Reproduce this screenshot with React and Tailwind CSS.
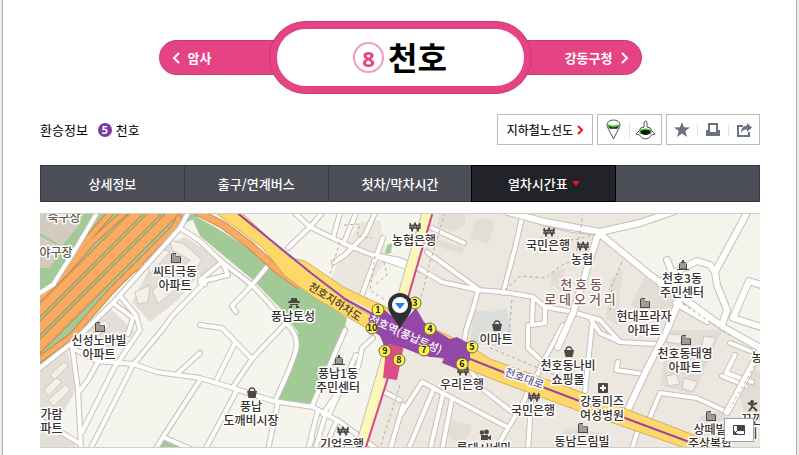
import React, { useState } from "react";

const tabs = ["상세정보", "출구/연계버스", "첫차/막차시간", "열차시간표"];

// Side streets
const roads = [
  "M36 371L72 343L113 303L180 228L200 241L222 262L252 285L268 302L283 320Q300 335 296 350Q292 365 275 401",
  "M180 228L188 213", "M54 283L75 250L97 213", "M40 293L54 284",
  "M113 303L133 318L128 334", "M120 296L136 315L140 330L114 368L82 432",
  "M205 282L173 315L162 330L133 365L90 450",
  "M72 346L78 390L81 450",
  "M72 348L97 361L133 364L157 372L200 378L233 388L273 401L313 407L340 422L378 450",
  "M98 362L88 380L78 393", "M200 353L178 373", "M222 262L200 280L205 284",
  "M200 380L163 437L155 450", "M163 437L200 453", "M40 420L79 443",
  "M271 262L252 285L232 306L236 312", "M200 282L228 275L222 262",
  "M200 325L222 328L252 359L233 387", "M235 343L217 379", "M285 324L252 359",
  "M237 390L205 450", "M278 402L268 450", "M345 330L312 406",
  "M318 410L308 450", "M326 413L315 450", "M337 420L324 450",
  "M373 338L362 348L358 367L352 372L323 414", "M356 355L330 413", "M312 438L308 450",
  "M295 213L310 227L347 245L373 255L400 260L420 270",
  "M322 213L310 227L288 248", "M340 213L333 238", "M356 213L345 240",
  "M375 213L365 235L345 255L334 262", "M383 238L360 300", "M375 256L410 268",
];

const eastRoads = [
  "M415 266L442 282L478 290L503 292L533 297L545 307L573 312L600 320",
  "M432 228L464 243", "M427 252L478 289", "M523 213L515 248L503 293",
  "M478 290L475 302L466 330L464 343", "M523 216L543 223L573 230L600 233",
  "M533 298L532 325L545 323L545 308",
  "M470 368L480 387L512 412", "M530 387L523 403L495 450", "M532 388L528 450",
  "M528 325L528 348L543 362L533 384", "M563 325L543 362", "M592 325L585 392",
  "M507 427L422 382L400 416", "M434 388L408 450", "M443 394L430 450", "M452 399L442 450",
  "M600 320L620 342L655 344", "M590 318L600 333L620 342", "M618 362L616 370L643 374",
  "M727 412L697 398L660 393L648 422", "M640 422L632 450",
  "M400 400L384 392", "M403 405L390 450",
  "M735 355L726 373L752 382", "M722 376L746 386", "M730 343L750 351",
];

const wideRoads = [
  "M505 211L545 222L600 232L640 223L675 211",
  "M600 234L650 275L683 298L723 327L764 350",
  "M598 234L573 313L558 347", "M680 298L667 330L645 373L625 416",
  "M748 211L715 272L717 285L727 310L722 325",
  "M660 283L668 276L697 261L710 265L715 272", "M667 260L673 275",
  "M764 286L749 281L733 318L764 328",
  "M676 303L707 321", "M764 344L727 412",
];

const blocks = [
  "M160 248L185 237L215 256L178 300L150 322L132 302Z", "M84 330L110 308L135 332L110 350Z",
  "M40 368L68 350L76 390L60 418L40 440Z", "M200 246L222 262L200 278Z",
  "M40 425L75 440L75 448H40Z",
];
const eastBlocks = [
  "M440 213H465L466 225L452 232L437 224Z", "M474 222L484 217L495 222L488 244L470 238Z",
  "M434 238L465 248L462 254L432 245Z", "M551 272L565 268L562 292L551 284Z",
  "M645 277L678 296L662 323L630 305Z", "M610 280L622 268L618 325L606 318Z",
  "M668 330H722L694 394L660 385Z", "M450 420L472 425L465 445L448 437Z",
  "M555 438L570 428L610 434L602 448H552Z", "M738 390L755 370L764 372V425L744 415Z",
  "M700 416L725 410L728 448H698Z",
];

const parcels = [
  "M146 260L160 248L170 252L150 274Z", "M152 290L174 276L182 284L158 304Z",
  "M170 240L184 244L202 260L192 274L184 266L190 260L172 250Z", "M135 292L150 285L148 302L138 304Z",
  "M50 375L64 362L68 366L54 380Z", "M44 390L56 378L62 382L48 396Z",
  "M48 400L66 384L70 390L54 406Z", "M92 330L104 320L110 326L98 336Z",
  "M668 334L684 335L680 344L666 342Z", "M704 336L716 338L706 362L698 360Z",
  "M666 376L676 374L680 384L668 386Z", "M684 378L698 382L692 392L682 388Z",
];

const dashes = [
  "M445 213L437 240L430 262L413 330", "M344 225L360 224L357 236L372 238", "M340 242L328 280L338 290",
  "M375 256L370 290L385 300", "M384 262L387 275L375 285", "M505 290L520 276L545 278L562 265L575 260L583 215",
  "M512 300L508 345", "M490 348L555 375", "M622 262L612 285L610 310", "M640 415L700 438",
  "M400 385L380 448", "M540 238L575 240L596 234", "M764 350L730 408", "M683 304L730 335",
];

const expressway = [
  "M60 278L80 248L112 211", "M40 299L66 272L92 242L126 211",
  "M36 362L72 336L112 290L170 232L178 222V211M130 272L140 265",
];
const expresswayLanes = ["M35 315L141 209", "M35 333L159 209", "M35 351L177 209"];

// x, y of the first line, then the lines of the label
const labels = [
  { x: 64, y: 222, lines: ["축구장"], color: "#66594d" },
  { x: 56, y: 257, lines: ["야구장"], color: "#66594d" },
  { x: 175, y: 276, lines: ["씨티극동", "아파트"], icon: "apt" },
  { x: 99, y: 345, lines: ["신성노바빌", "아파트"], icon: "apt" },
  { x: 293, y: 321, lines: ["풍납토성"], icon: "gate" },
  { x: 46, y: 419, lines: ["한가람", "아파트"] },
  { x: 251, y: 411, lines: ["풍납", "도깨비시장"], icon: "basket" },
  { x: 338, y: 378, lines: ["풍납1동", "주민센터"], icon: "office" },
  { x: 342, y: 449, lines: ["기업은행"], icon: "won" },
  { x: 414, y: 245, lines: ["농협은행"], icon: "won" },
  { x: 548, y: 250, lines: ["국민은행"], icon: "won" },
  { x: 582, y: 264, lines: ["농협"], icon: "won" },
  { x: 682, y: 283, lines: ["천호3동", "주민센터"], icon: "office" },
  { x: 644, y: 321, lines: ["현대프라자", "아파트"], icon: "apt" },
  { x: 496, y: 344, lines: ["이마트"], icon: "basket" },
  { x: 568, y: 370, lines: ["천호동나비", "쇼핑몰"], icon: "basket" },
  { x: 685, y: 358, lines: ["천호동태영", "아파트"], icon: "apt" },
  { x: 462, y: 389, lines: ["우리은행"], icon: "won" },
  { x: 533, y: 415, lines: ["국민은행"], icon: "won" },
  { x: 602, y: 406, lines: ["강동미즈", "여성병원"], icon: "cross" },
  { x: 582, y: 446, lines: ["동남드림빌"], icon: "apt" },
  { x: 710, y: 434, lines: ["상떼빌", "주상복합"], icon: "apt" },
  { x: 484, y: 453, lines: ["롯데시네마"], icon: "movie" },
  { x: 757, y: 362, lines: ["농"] },
  { x: 752, y: 424, lines: ["꼬깐", "이"], icon: "play" },
];

const exits = [
  [1, 378, 310], [10, 372, 328], [9, 385, 351], [8, 399, 360], [7, 424, 350],
  [6, 462, 364], [5, 472, 347], [4, 430, 329], [3, 415, 303],
];

const Streets = ({ list, width, casing = "#c6c0b8", color = "#fff" }) => (
  <g fill="none" strokeLinecap="round" strokeLinejoin="round">
    {list.map((d) => <path key={d} d={d} stroke={casing} strokeWidth={width + 2} />)}
    {list.map((d) => <path key={d} d={d} stroke={color} strokeWidth={width} />)}
  </g>
);

const PlaceIcon = ({ type }) => {
  if (type === "won") {
    return <path d="M-5 -4L-3 4L0 -4L3 4L5 -4M-6 -1.5H6M-6 1H6" fill="none" stroke="#4c4846" strokeWidth="1.5" />;
  }
  if (type === "apt") {
    return (
      <g>
        <path d="M-5 5V-4L-3 -5H0V-2H4L5 -1V5Z" fill="#4c4846" />
        <path d="M-3.5 -2.5H0M-3.5 0H4M-3.5 2.5H4" stroke="#f2efe8" strokeDasharray="1 1" />
      </g>
    );
  }
  if (type === "office") {
    return (
      <g>
        <path d="M-6 5V4H-4V-1L-2 -3H-1V-5H1V-3H2L4 -1V4H6V5Z" fill="#4c4846" />
        <path d="M-2.5 -0.5H3M-2.5 2H3" stroke="#f2efe8" strokeDasharray="1 1" />
      </g>
    );
  }
  if (type === "basket") {
    return (
      <g>
        <path d="M-5 -2H5L3.5 5H-3.5Z" fill="#4c4846" />
        <path d="M-3 -1Q-3 -5 0 -5Q3 -5 3 -1" fill="none" stroke="#4c4846" strokeWidth="1.3" />
      </g>
    );
  }
  if (type === "gate") {
    return <path d="M-6 -1L-3 -3V-5H3V-3L6 -1V0H-6ZM-4 1H4V2H-4ZM-5 3H-2V5H-5ZM2 3H5V5H2ZM-3 2H-2V5H-3ZM2 2H3V5H2Z" fill="#4c4846" />;
  }
  if (type === "cross") {
    return (
      <g>
        <rect x="-5" y="-5" width="10" height="10" rx="1" fill="#4c4846" />
        <path d="M-3 0H3M0 -3V3" stroke="#fff" strokeWidth="2" />
      </g>
    );
  }
  if (type === "movie") {
    return (
      <g fill="#4c4846">
        <circle cx="-3" cy="-2.5" r="2.2" />
        <circle cx="1.5" cy="-3" r="2.4" />
        <path d="M-4 0H3V2L6 0V5L3 4V5H-4Z" />
      </g>
    );
  }
  return (
    <g fill="none" stroke="#4c4846" strokeWidth="2">
      <circle cx="-1" cy="-4" r="1" />
      <path d="M-5 -3L-1 -1L4 -3M-1 -1V1L-4 5M0 1L4 5" />
    </g>
  );
};

const StationMap = () => (
  <svg
    viewBox="40 213 720 235"
    role="img"
    aria-label="천호역 주변 지도"
    className="block w-full font-['Noto_Sans_CJK_KR',sans-serif]"
  >
    <rect x="40" y="213" width="720" height="235" fill="#f5f4ed" />
    <path d="M432 213H760V448H362L395 340Z" fill="#ece8df" />
    <path d="M600 234L680 213H760V348L723 327L683 298L650 275Z" fill="#f4f4ec" />
    <path d="M347 245L360 222L380 220L388 258L360 298L330 280Z" fill="#ebe7df" />
    {blocks.map((d) => <path key={d} d={d} fill="#e3dfd8" />)}
    {eastBlocks.map((d) => <path key={d} d={d} fill="#e2ded6" />)}
    {parcels.map((d) => <path key={d} d={d} fill="#f3f0e9" stroke="#cfc9bf" strokeWidth="1" />)}
    <path d="M474 310L490 312L506 308L512 330L500 348L470 342Z" fill="#dcdedb" />

    {/* parks */}
    <g fill="#a1ca96">
      <path d="M40 213H208L180 225L130 272L40 367Z" />
      <path d="M190 213L220 230L267 260L300 285L347 318L343 335L310 404L276 400L297 354L298 332L280 308L253 280L200 236Z" />
      <path d="M152 450L156 444L163 440L178 446V450Z" />
      <path d="M387 245L392 243L391 253L385 254Z" />
    </g>
    <path d="M40 213H84L78 226L62 246L40 233Z M40 236L63 248L50 268H40Z" fill="#d3cbc0" />

    {/* Olympic-daero */}
    <Streets list={expressway} width={5} casing="#c58549" color="#f9ab62" />
    <Streets list={expresswayLanes} width={9} casing="#c58549" color="#f9ab62" />

    <Streets list={roads} width={4} />
    <Streets list={eastRoads} width={4} />
    <Streets list={wideRoads} width={6} />
    <g fill="none" stroke="#b5aa99" strokeWidth="1" strokeDasharray="3 3">
      {dashes.map((d) => <path key={d} d={d} />)}
    </g>

    {/* Cheonho-daero */}
    <g fill="none" strokeLinejoin="round">
      <path d="M196 211L223 225L250 245L275 268L300 286" stroke="#c98c55" strokeWidth="8" />
      <path d="M196 211L223 225L250 245L275 268L300 286" stroke="#f9ab62" strokeWidth="6" />
      <path d="M213 211H240L290 258L305 261L345 288L388 308V318L340 298L375 318L395 335L370 330L315 298L285 276L262 247Z" fill="#fed868" stroke="#d4ad60" />
      <path d="M430 327L470 346L490 359L600 399L730 449H688L590 415L500 382L462 367L410 345Z" fill="#fed868" stroke="#d4ad60" />
      <path d="M345 297L378 312L376 316L350 303Z" fill="#f4e3b5" />
      <path d="M428 211L405 290L385 365L360 450" stroke="#c6c0b8" strokeWidth="12" />
      <path d="M428 211L405 290L385 365L360 450" stroke="#fdf7ba" strokeWidth="10" />
      <path d="M433 211L409 294L388 378L365 450" stroke="#d94a84" strokeWidth="2" />
      <path d="M235 211L311 273L345 299L385 321M465 357L503 372L582 402L692 443" stroke="#9348a7" strokeWidth="2" />
    </g>
    <path d="M387 340L404 345L397 380L383 378Z" fill="#dc4c88" />
    <path d="M382 308L394 318L406 319L416 308L424 322L434 329L450 339L457 337L470 344V360L462 371L442 363L444 358L430 357L416 353L404 348L388 343L386 350L380 336L371 330L377 322Z" fill="#9348a7" />

    <g textAnchor="middle" fontSize="12" fontWeight="500" stroke="#fff" strokeWidth="3" strokeLinejoin="round" paintOrder="stroke">
      {labels.map((l) => (
        <g key={l.lines[0] + l.x}>
          {l.icon && (
            <g transform={`translate(${l.x + 1} ${l.y - 18})`} stroke="none">
              <PlaceIcon type={l.icon} />
            </g>
          )}
          {l.lines.map((line, i) => (
            <text key={line} x={l.x} y={l.y + i * 14} fill={l.color || "#35312f"}>{line}</text>
          ))}
        </g>
      ))}
      <g fontSize="13" fill="#7d5a55">
        <text x="581" y="289">천 호 동</text>
        <text x="580" y="304">로 데 오 거 리</text>
      </g>
      <text transform="translate(333 305) rotate(33)" fontSize="11" fill="#4a4030" stroke="#fed868" strokeWidth="2">천호지하차도</text>
      <text transform="translate(404 338) rotate(24)" fontSize="11" fill="#fff" stroke="#9348a7">천호역(풍납토성)</text>
      <text transform="translate(523 382) rotate(20)" fontSize="11" fill="#655e9c">천호대로</text>
    </g>

    {exits.map(([no, x, y]) => (
      <g key={no}>
        <circle cx={x} cy={y} r="6" fill="#fff04f" stroke="#6e6641" />
        <text x={x} y={y + 3} textAnchor="middle" fontSize="9" fontWeight="700" fill="#222">{no}</text>
      </g>
    ))}

    <path d="M400 330C398 321 388 316 388 305A12 12 0 1 1 412 305C412 316 402 321 400 330Z" fill="#2f3033" />
    <circle cx="400" cy="305" r="8" fill="#fff" />
    <path d="M395 303H405L400 309Z" fill="#1680ee" />
    <path d="M40 213.5H760M40 447.5H760" stroke="#cfcfcb" />
  </svg>
);

const Chevron = ({ flip }) => (
  <svg width="8" height="12" viewBox="0 0 8 12" fill="none" stroke="currentColor" strokeWidth="2" aria-hidden="true">
    <path d={flip ? "M1 1L6 6L1 11" : "M7 1L2 6L7 11"} />
  </svg>
);

const StationSign = () => (
  <div className="flex items-center justify-center">
    <a href="#prev" className="-mr-2 flex h-[35px] w-[118px] items-center gap-2 rounded-l-full border border-[#c23c74] bg-[#e64384] pl-3 text-[13px] font-bold text-white">
      <Chevron /> 암사
    </a>
    <div className="relative rounded-full border border-[#c23c74] bg-[#e64384] p-[7px]">
      <h1 className="flex h-[57px] w-[247px] items-center justify-center gap-1 rounded-full bg-white text-[32px] leading-none font-bold text-black">
        <span className="flex size-[31px] items-center justify-center rounded-full border-2 border-[#f29cc0] font-['Open_Sans',sans-serif] text-[22px] text-[#e64384]">8</span>
        <span className="pb-1">천호</span>
      </h1>
    </div>
    <a href="#next" className="-ml-2 flex h-[35px] w-[118px] items-center justify-end gap-2 rounded-r-full border border-[#c23c74] bg-[#e64384] pr-3 text-[13px] font-bold text-white">
      강동구청 <Chevron flip />
    </a>
  </div>
);

const Tools = () => (
  <div className="flex gap-1">
    <a href="#linemap" className="flex h-[31px] items-center gap-1 border border-[#bcbcbc] px-[9px] text-xs font-medium text-[#222]">
      지하철노선도
      <svg width="6" height="10" viewBox="0 0 6 10" fill="none" stroke="#f0141e" strokeWidth="2" aria-hidden="true">
        <path d="M1 1L5 5L1 9" />
      </svg>
    </a>
    <div className="flex h-[31px] items-center border border-[#bcbcbc]">
      <button type="button" aria-label="지도" className="flex w-[31px] justify-center">
        <svg width="15" height="21" viewBox="0 0 15 21">
          <path d="M7.5 20L3 11Q1 8 1 6Q1.500 1 7.500 1Q13.500 1 14 6Q14 8 12 11Z" fill="#fff" stroke="#555" />
          <path d="M1.500 5Q7.500 8 13.500 5V8L11 10H4L1.500 8Z" fill="#49b62f" />
          <path d="M3 7Q7.500 10 12 7L11 9.500H4Z" fill="#111" />
        </svg>
      </button>
      <span className="h-4 w-px bg-[#e2e2e2]" />
      <button type="button" aria-label="거리뷰" className="flex w-[31px] justify-center">
        <svg width="21" height="20" viewBox="0 0 21 20">
          <path d="M9 7V3Q9 1 10.500 1Q12 1 12 3V7Q16 7 17 11L20 14L16.500 15Q14 19 10.500 19Q7 19 4.500 15L1 14L4 11Q5 7 9 7Z" fill="#fff" stroke="#555" />
          <path d="M4.500 10Q10.500 7 16.500 10V14H4.500Z" fill="#49b62f" />
          <path d="M5.500 11Q10.500 9 15.500 11Q15 15 10.500 15Q6 15 5.500 11Z" fill="#111" />
        </svg>
      </button>
    </div>
    <div className="flex h-[31px] items-center border border-[#bcbcbc] text-[#6a7180]">
      <button type="button" aria-label="즐겨찾기" className="flex w-[30px] justify-center">
        <svg width="16" height="15" viewBox="0 0 16 15" fill="currentColor">
          <path d="M8 0L10 5.300L16 5.500L11.300 9L13 15L8 11.500L3 15L4.700 9L0 5.500L6 5.300Z" />
        </svg>
      </button>
      <span className="h-3 w-px bg-[#e2e2e2]" />
      <button type="button" aria-label="인쇄" className="flex w-[30px] justify-center">
        <svg width="14" height="13" viewBox="0 0 14 13" fill="currentColor">
          <path d="M2 0H12V7H14V13H0V7H2ZM4 2V9H10V2Z" fillRule="evenodd" />
        </svg>
      </button>
      <span className="h-3 w-px bg-[#e2e2e2]" />
      <button type="button" aria-label="공유" className="flex w-[30px] justify-center">
        <svg width="15" height="14" viewBox="0 0 15 14">
          <path d="M6 3H1V13H12V9" fill="none" stroke="currentColor" strokeWidth="2" />
          <path d="M10 0L15 4.500L10 9V6.500Q6 6 4 10Q4 3 10 2.500Z" fill="currentColor" />
        </svg>
      </button>
    </div>
  </div>
);

export default function App() {
  const [active, setActive] = useState("열차시간표");

  return (
    <div className="min-h-screen bg-[#eeeeee] px-0.5 font-['Noto_Sans_CJK_KR',sans-serif]">
      <main className="min-h-screen border-x border-[#b0b0b0] bg-white px-9 pt-[21px] pl-[37px]">
        <StationSign />

        <div className="mt-5 flex items-center justify-between">
          <div className="flex items-center text-[13px] text-black">
            <span>환승정보</span>
            <a href="#line5" className="ml-2.5 flex items-center gap-1">
              <span className="flex size-3.5 items-center justify-center rounded-full bg-[#7b3aa5] text-[11px] leading-none font-bold text-white">5</span>
              천호
            </a>
          </div>
          <Tools />
        </div>

        <nav className="mt-5 flex h-[37px] border-l border-[#383a42] bg-[#4c4e58]">
          {tabs.map((tab) => (
            <button
              key={tab}
              type="button"
              onClick={() => setActive(tab)}
              className={`-ml-px flex w-[calc(20%+1px)] items-center justify-center gap-1 border text-[13px] font-medium text-white ${active === tab ? "relative border-black bg-[#222329]" : "border-[#383a42]"}`}
            >
              {tab}
              {active === tab && (
                <svg width="8" height="5" viewBox="0 0 8 5" fill="#f0141e" aria-hidden="true">
                  <path d="M0 0H8L4 5Z" />
                </svg>
              )}
            </button>
          ))}
          <div className="grow border-y border-r border-[#383a42]" />
        </nav>

        <div className="relative mt-[11px]">
          <StationMap />
          <button type="button" aria-label="지도 크게보기" className="absolute right-1.5 bottom-1.5 flex h-6 w-[30px] items-center justify-center border border-[#9aa0b0] bg-white">
            <svg width="12" height="10" viewBox="0 0 12 10">
              <path d="M0.500 0.500H11.500V9.500H0.500Z" fill="#fff" stroke="#444" />
              <path d="M4 1H11V6H4Z" fill="#444" />
              <path d="M1.500 8.500L4 6M1.500 6V8.500H4" fill="none" stroke="#444" />
            </svg>
          </button>
        </div>
      </main>
    </div>
  );
}
